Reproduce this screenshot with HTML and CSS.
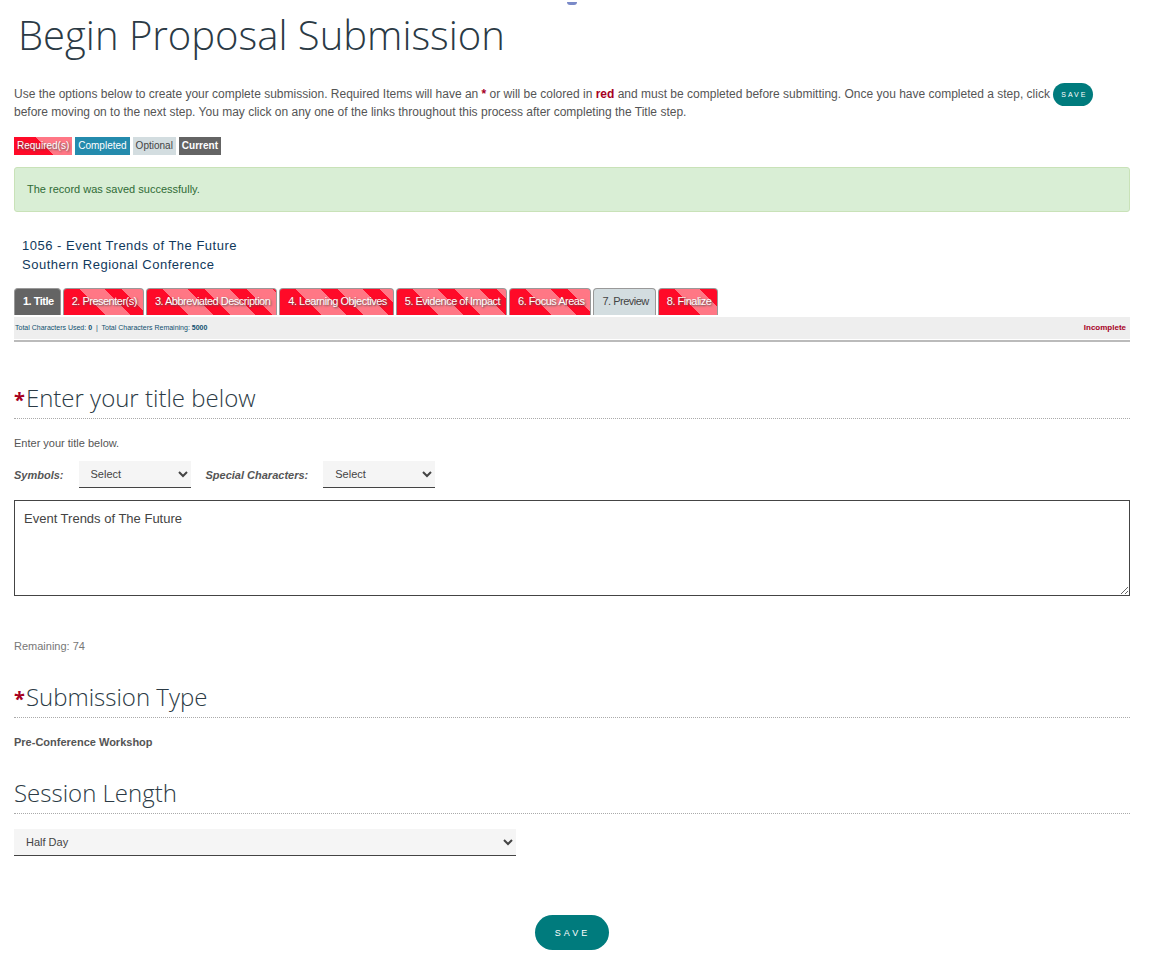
FILE: index.html
```
<!DOCTYPE html>
<html lang="en">
  <head>
    <meta charset="UTF-8" />
    <title>Begin Proposal Submission</title>
    <link rel="stylesheet" href="styles.css">
  </head>
  <body>
    <div class="loader"></div>
    <main class="container">
      <h1>Begin Proposal Submission</h1>

      <p class="intro">
        Use the options below to create your complete submission. Required Items will have an
        <b class="required">*</b> or will be colored in <b class="required">red</b> and must be
        completed before submitting. Once you have completed a step, click
        <button type="button" class="save save-small">SAVE</button><br />
        before moving on to the next step. You may click on any one of the links throughout this
        process after completing the Title step.
      </p>

      <div class="legend">
        <span class="key striped">Required(s)</span>
        <span class="key completed">Completed</span>
        <span class="key optional">Optional</span>
        <span class="key current">Current</span>
      </div>

      <div class="alert" role="status">The record was saved successfully.</div>

      <div class="record">
        1056 - Event Trends of The Future<br />
        Southern Regional Conference
      </div>

      <nav class="tabs">
        <a href="#" class="tab current">1. Title</a>
        <a href="#" class="tab striped">2. Presenter(s)</a>
        <a href="#" class="tab striped">3. Abbreviated Description</a>
        <a href="#" class="tab striped">4. Learning Objectives</a>
        <a href="#" class="tab striped">5. Evidence of Impact</a>
        <a href="#" class="tab striped">6. Focus Areas</a>
        <a href="#" class="tab optional">7. Preview</a>
        <a href="#" class="tab striped">8. Finalize</a>
      </nav>
      <div class="status-bar">
        <span>Total Characters Used: <b>0</b> &nbsp;|&nbsp; Total Characters Remaining: <b>5000</b></span>
        <b class="required state">Incomplete</b>
      </div>

      <form>
        <section>
          <h2><span class="star">*</span><label for="title">Enter your title below</label></h2>
          <p class="hint">Enter your title below.</p>
          <div class="pickers">
            <label for="symbols">Symbols:</label>
            <select id="symbols" class="picker">
              <option>Select</option>
            </select>
            <label for="characters">Special Characters:</label>
            <select id="characters" class="picker">
              <option>Select</option>
            </select>
          </div>
          <textarea id="title">Event Trends of The Future</textarea>
          <p class="remaining">Remaining: 74</p>
        </section>

        <section>
          <h2><span class="star">*</span>Submission Type</h2>
          <p class="hint"><b>Pre-Conference Workshop</b></p>
        </section>

        <section>
          <h2><label for="length">Session Length</label></h2>
          <select id="length" class="length">
            <option>Half Day</option>
          </select>
        </section>

        <div class="actions">
          <button type="button" class="save">SAVE</button>
        </div>
      </form>
    </main>
  </body>
</html>
```
FILE: styles.css
```
* {
  box-sizing: border-box;
}

body {
  margin: 0;
  position: relative;
  overflow-x: hidden;
  font-family: "Liberation Sans", Arial, sans-serif;
  font-size: 11px;
  line-height: 18px;
  color: #555;
  background: #fff;
}

.loader {
  position: absolute;
  top: 2px;
  left: 567px;
  width: 10px;
  height: 3px;
  border-radius: 0 0 5px 5px;
  background: #7a8ac8;
}

.container {
  padding: 9px 31px 6px 14px;
}

h1,
h2 {
  margin: 0;
  font-family: "Open Sans", sans-serif;
  font-weight: 300;
  color: #2b3a45;
}

h1 {
  padding-left: 4px;
  font-size: 40px;
  line-height: 52px;
}

h2 {
  margin-bottom: 15px;
  padding-bottom: 4px;
  border-bottom: 1px dotted #aaa;
  font-size: 24px;
  line-height: 32px;
}

p {
  margin: 0;
}

.required,
.star {
  color: #a6001f;
}

.star {
  margin-right: 1px;
  font-size: 20px;
  font-weight: 700;
  line-height: 1;
}

.intro {
  margin: 24px 0 16px;
  font-size: 12px;
}

.save {
  height: 35px;
  padding: 0 19px 0 20px;
  border: none;
  border-radius: 18px;
  background: #007b7d;
  color: #fff;
  font-family: inherit;
  font-size: 9px;
  letter-spacing: 3px;
  cursor: pointer;
}

.save-small {
  height: 23px;
  margin: -3px 0;
  padding: 0 6px 0 8px;
  border-radius: 12px;
  font-size: 7px;
  letter-spacing: 2px;
  vertical-align: middle;
}

.legend {
  display: flex;
  gap: 3px;
  font-size: 10px;
}

.key {
  padding: 0 3px;
}

.striped {
  background: linear-gradient(45deg, #ff0a28 29px, transparent 29px),
    repeating-linear-gradient(45deg, #ff7785 0 17px, #ff0a28 17px 29px, #ff7785 29px 30px);
  color: #fff;
  text-shadow: 1px 1px 2px #555;
}

.key.striped {
  background: linear-gradient(45deg, #ff0a28 28px, #ff7785 28px);
}

.completed {
  background: #248bad;
  color: #fff;
}

.optional {
  background: #d3dde0;
  color: #444;
}

.current {
  background: #646464;
  color: #fff;
  font-weight: 700;
}

.alert {
  margin: 12px 0 24px;
  padding: 12px 12px 13px;
  border: 1px solid #c9e2b8;
  border-radius: 3px;
  background: #d9eed5;
  color: #2f6b35;
}

.record {
  margin-bottom: 14px;
  padding-left: 8px;
  font-size: 13px;
  line-height: 19px;
  letter-spacing: 0.5px;
  color: #10395c;
}

.tabs {
  display: flex;
  gap: 2px;
}

.tab {
  height: 27px;
  padding: 0 6px 0 8px;
  border: 1px solid #999;
  border-bottom: none;
  border-radius: 4px 4px 0 0;
  line-height: 25px;
  letter-spacing: -0.5px;
  text-decoration: none;
}

.status-bar {
  display: flex;
  justify-content: space-between;
  margin: 2px 0 40px;
  padding: 2px 4px 3px 1px;
  border-bottom: 2px solid #bbb;
  box-shadow: inset 0 -1px #fff;
  background: #eee;
  font-size: 7px;
  color: #10506f;
}

.state {
  font-size: 8px;
}

.hint {
  margin-bottom: 9px;
}

.pickers {
  display: flex;
  align-items: center;
  gap: 15px;
  margin-bottom: 12px;
}

.pickers label {
  font-style: italic;
  font-weight: 700;
}

select {
  height: 27px;
  padding: 0 0 0 8px;
  border: none;
  border-bottom: 1px solid #444;
  border-radius: 0;
  background: #f5f5f5;
  color: #444;
  font-family: inherit;
  font-size: 11px;
}

.picker {
  width: 112px;
}

.length {
  display: block;
  width: 45%;
}

textarea {
  display: block;
  width: 100%;
  height: 96px;
  padding: 9px;
  border: 1px solid #444;
  background: #fff;
  color: #444;
  font-family: inherit;
  font-size: 13px;
  line-height: 18px;
}

.remaining {
  margin: 41px 0 26px;
  color: #777;
}

section + section h2 {
  margin-top: 26px;
}

.actions {
  margin-top: 59px;
  text-align: center;
}
```
